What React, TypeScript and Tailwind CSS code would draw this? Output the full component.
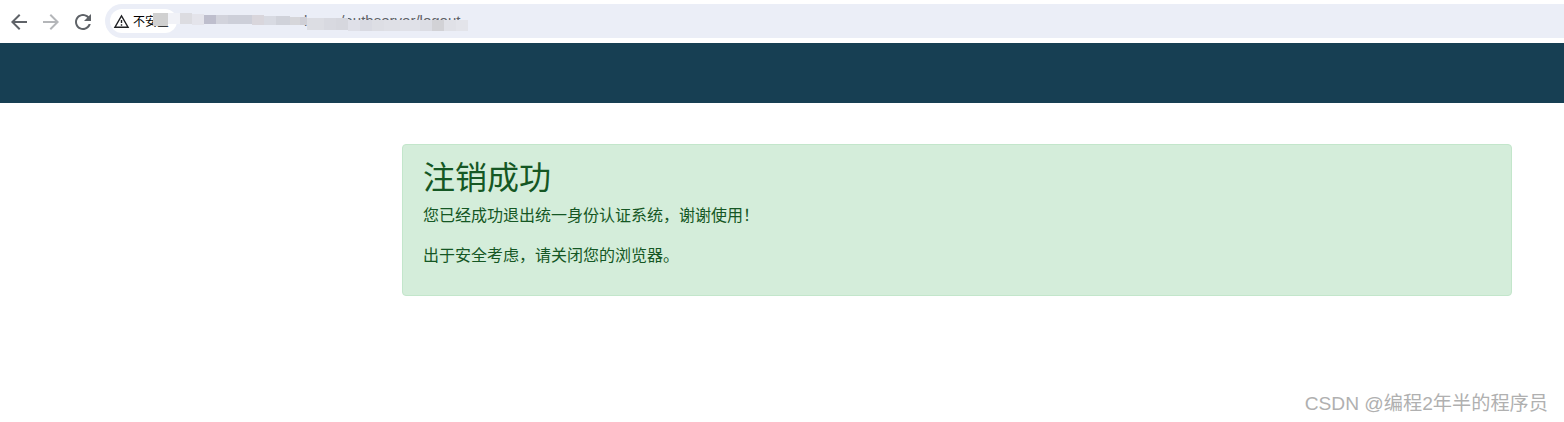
const font = { fontFamily: '"Liberation Sans", "Noto Sans CJK SC", sans-serif' };

const mosaic: [number, number, number, number, string][] = [
  [153, 13, 15, 13, "#d0d0d0"],
  [168, 13, 12, 11, "#f1f2f7"],
  [180, 13, 12, 11, "#dcdce1"],
  [192, 14, 12, 11, "#e4e4eb"],
  [204, 15, 12, 9, "#bebecd"],
  [216, 15, 12, 9, "#d2d3dc"],
  [228, 15, 24, 9, "#cdcfd9"],
  [252, 15, 12, 10, "#d9d6dc"],
  [264, 16, 12, 9, "#d8dae2"],
  [276, 16, 14, 9, "#d0d2da"],
  [290, 17, 10, 8, "#d6d6da"],
  [300, 17, 7, 8, "#cfcfd6"],
  [307, 18, 17, 12, "#dcdde3"],
  [324, 18, 12, 12, "#d8d9e0"],
  [336, 18, 12, 12, "#d6d7de"],
  [348, 20, 12, 11, "#dfe0e8"],
  [360, 20, 12, 11, "#d9dae2"],
  [372, 20, 12, 11, "#dddee4"],
  [384, 20, 16, 11, "#dfe0e6"],
  [400, 20, 20, 11, "#e0e1e8"],
  [420, 20, 12, 11, "#dcdde4"],
  [432, 20, 12, 11, "#d2d2d6"],
  [444, 20, 12, 11, "#e0e1e7"],
  [456, 20, 12, 11, "#e3e4ea"],
];

function ChromeIcon({ d, color, size = 24 }: { d: string; color: string; size?: number }) {
  return (
    <svg viewBox="0 0 24 24" width={size} height={size} fill={color} className="shrink-0">
      <path d={d} />
    </svg>
  );
}

export default function App() {
  return (
    <div className="relative h-[422px] w-[1564px] overflow-hidden bg-white font-['Liberation_Sans','Noto_Sans_CJK_SC',sans-serif]">
      <div className="flex h-[43px] items-center pl-[7px]">
        <ChromeIcon color="#5f6368" d="M20 11H7.83l5.59-5.59L12 4l-8 8 8 8 1.41-1.41L7.83 13H20v-2z" />
        <div className="ml-[8px]">
          <ChromeIcon color="#b4b6b9" d="M12 4l-1.41 1.41L16.17 11H4v2h12.17l-5.58 5.59L12 20l8-8z" />
        </div>
        <div className="ml-[8px]">
          <ChromeIcon color="#5f6368" d="M17.65 6.35C16.2 4.9 14.21 4 12 4c-4.42 0-7.99 3.58-7.99 8s3.57 8 7.99 8c3.73 0 6.84-2.55 7.73-6h-2.08c-.82 2.33-3.04 4-5.65 4-3.31 0-6-2.69-6-6s2.69-6 6-6c1.66 0 3.14.69 4.22 1.78L13 11h7V4l-2.35 2.35z" />
        </div>
        <div className="mb-[1px] ml-[10px] flex h-[34px] flex-1 items-center rounded-l-[17px] bg-[#ebeef7] pl-[5px]">
          <div className="flex h-[24px] w-[67px] items-center overflow-hidden rounded-full bg-white pl-[3px]">
            <ChromeIcon color="#202124" size={17} d="M12 5.99L19.53 19H4.47L12 5.99M12 2L1 21h22L12 2zm1 14h-2v2h2v-2zm0-6h-2v4h2v-4z" />
            <span className="ml-[3px] mt-[1px] whitespace-nowrap text-[12px] text-black">不安全</span>
          </div>
          <div className="flex h-[24px] items-center whitespace-nowrap text-[15px] text-[#5f6368]">
            <span className="ml-[127px]">h</span>
            <span className="ml-[28px]">/authserver/logout</span>
          </div>
        </div>
      </div>
      {mosaic.map(([x, y, w, h, c]) => (
        <div key={x} className="absolute" style={{ left: x, top: y, width: w, height: h, background: c }} />
      ))}
      <div className="h-[60px] bg-[#173f53]" />
      <div className="pl-[402px] pt-[41px]">
        <div className="h-[152px] w-[1110px] rounded-[4px] border border-[#c3e6cb] bg-[#d4edda] pl-[20px] pt-[14px] text-[#155724]">
          <h1 className="text-[32px] leading-[38px]">注销成功</h1>
          <p className="mt-[7px] text-[16px] leading-[24px]">您已经成功退出统一身份认证系统，谢谢使用！</p>
          <p className="mt-[16px] text-[16px] leading-[24px]">出于安全考虑，请关闭您的浏览器。</p>
        </div>
      </div>
      <div className="absolute right-[16px] top-[392px] text-[19.2px] leading-[24px] text-[#b0b0b0]" style={font}>
        CSDN @编程2年半的程序员
      </div>
    </div>
  );
}
